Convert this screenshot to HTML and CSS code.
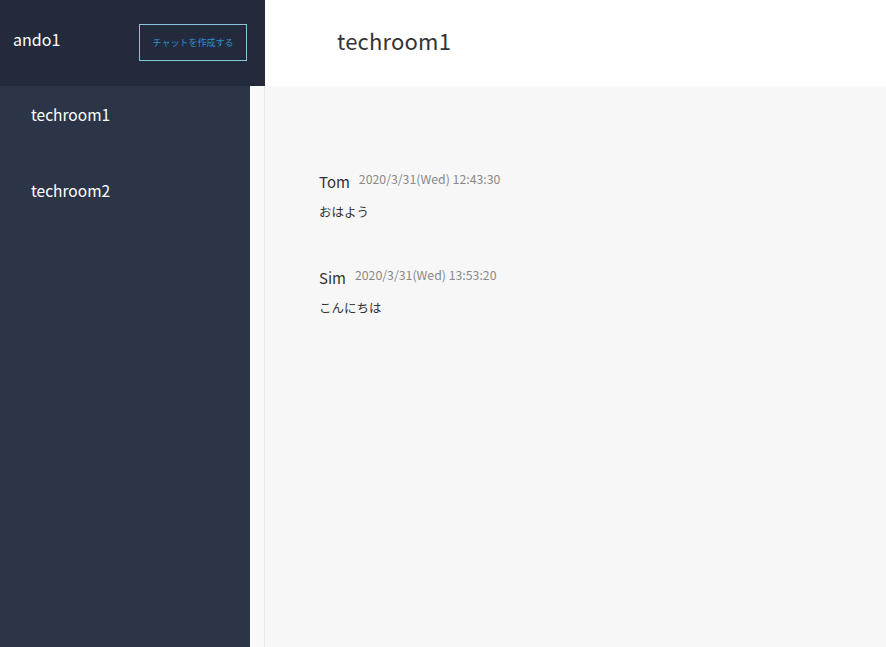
FILE: index.html
```html
<!DOCTYPE html>
<html lang="ja">
<head>
<meta charset="utf-8">
<link rel="stylesheet" href="styles.css">
</head>
<body>
<div class="app">
  <header class="top">
    <div class="top-left">
      <span class="user">ando1</span>
      <button class="create">チャットを作成する</button>
    </div>
    <div class="top-right">
      <h1 class="title">techroom1</h1>
    </div>
  </header>
  <div class="body">
    <nav class="sidebar">
      <div class="room">techroom1</div>
      <div class="room">techroom2</div>
    </nav>
    <div class="gutter"></div>
    <main class="main">
      <div class="msg">
        <div class="meta"><span class="name">Tom</span><span class="date">2020/3/31(Wed) 12:43:30</span></div>
        <p class="text">おはよう</p>
      </div>
      <div class="msg">
        <div class="meta"><span class="name">Sim</span><span class="date">2020/3/31(Wed) 13:53:20</span></div>
        <p class="text">こんにちは</p>
      </div>
    </main>
  </div>
</div>
</body>
</html>
```

FILE: styles.css
```css
* { box-sizing: border-box; }
html, body { margin: 0; height: 100%; }
body {
  font-family: "Noto Sans CJK JP", "Noto Sans", sans-serif;
  background: #f7f7f7;
  color: #222;
}
.app { display: flex; flex-direction: column; height: 647px; }
.top { display: flex; height: 86px; flex: none; }
.top-left {
  width: 265px;
  background: #222a3b;
  display: flex;
  align-items: center;
  justify-content: space-between;
  padding: 0 18px 0 13px;
}
.user { color: #fff; font-size: 16px; padding-bottom: 8px; }
.create {
  width: 108px;
  height: 37px;
  background: transparent;
  border: 1px solid #86c5dc;
  color: #2e8fcc;
  font-family: inherit;
  font-size: 9px;
  padding: 0;
  margin-top: -1px;
}
.top-right {
  flex: 1;
  background: #fff;
  display: flex;
  align-items: center;
  padding: 0 0 6px 72px;
}
.title { margin: 0; font-weight: 400; font-size: 22px; color: #333; letter-spacing: 0.2px; }
.body { flex: 1; display: flex; }
.sidebar { width: 250px; background: #2c3547; padding-top: 17px; }
.room { color: #fff; font-size: 15.5px; padding-left: 31px; height: 76px; }
.gutter { width: 15px; background: #f9f9f9; border-right: 1px solid #e6e6e6; }
.main { flex: 1; background: #f7f7f7; padding: 85px 0 0 54px; }
.msg { margin-bottom: 46px; }
.meta { display: flex; align-items: baseline; gap: 9px; }
.name { font-size: 15px; color: #333; }
.date { font-size: 12.3px; color: #888; position: relative; top: -4px; }
.text { margin: 10px 0 0; font-size: 12.5px; color: #333; }
```
